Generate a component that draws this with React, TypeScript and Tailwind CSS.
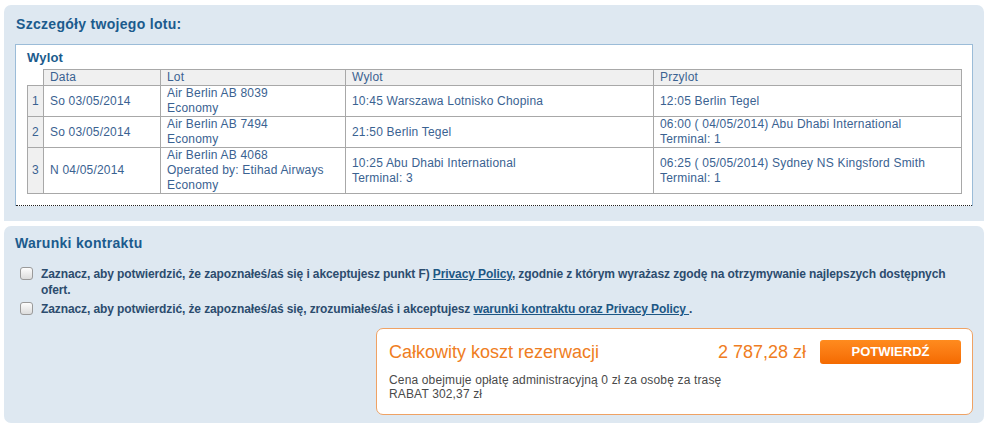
import React from "react";

const rows = [
  { n: "1", data: "So 03/05/2014", lot: ["Air Berlin AB 8039", "Economy"], wylot: ["10:45 Warszawa Lotnisko Chopina"], przylot: ["12:05 Berlin Tegel"] },
  { n: "2", data: "So 03/05/2014", lot: ["Air Berlin AB 7494", "Economy"], wylot: ["21:50 Berlin Tegel"], przylot: ["06:00 ( 04/05/2014) Abu Dhabi International", "Terminal: 1"] },
  { n: "3", data: "N 04/05/2014", lot: ["Air Berlin AB 4068", "Operated by: Etihad Airways", "Economy"], wylot: ["10:25 Abu Dhabi International", "Terminal: 3"], przylot: ["06:25 ( 05/05/2014) Sydney NS Kingsford Smith", "Terminal: 1"] },
];

function Lines({ items }: { items: string[] }) {
  return (
    <>
      {items.map((t, i) => (
        <div key={i}>{t}</div>
      ))}
    </>
  );
}

function Check() {
  return (
    <span className="mt-[1px] inline-block h-[13px] w-[13px] shrink-0 rounded-[3px] border border-[#9a9a9a] bg-gradient-to-b from-[#fdfdfd] to-[#dcdcdc]" />
  );
}

export default function App() {
  return (
    <div className="min-h-[428px] w-[988px] bg-white pt-[5px] font-['Liberation_Sans',Arial,sans-serif]">
      {/* Panel 1 */}
      <div className="ml-[4px] w-[980px] rounded-t-[7px] bg-[#dee8f1] pb-[15px] pl-[11px] pt-[11px]">
        <h2 className="pl-[1px] text-[14px] font-bold leading-[17px] tracking-[0.3px] text-[#1b5b8d]">Szczegóły twojego lotu:</h2>
        <div className="mt-[11px] w-[958px] border border-b-0 border-[#9bbcd8] bg-white">
          <div className="px-[11px] pt-[5px] text-[13px] font-bold leading-[16px] tracking-[0.2px] text-[#1b5b8d]">Wylot</div>
          <div className="pb-[11px] pl-[11px] pt-[3px]">
            <table className="w-[934px] table-fixed border-collapse text-[12px] leading-[15px] tracking-[0.2px] text-[#3a6291]">
              <colgroup>
                <col className="w-[16px]" />
                <col className="w-[117px]" />
                <col className="w-[185px]" />
                <col className="w-[308px]" />
                <col className="w-[308px]" />
              </colgroup>
              <thead>
                <tr>
                  <th className="p-0"></th>
                  <th className="border border-[#a8a8a8] bg-[#f0f0f0] px-[6px] text-left font-normal">Data</th>
                  <th className="border border-[#a8a8a8] bg-[#f0f0f0] px-[6px] text-left font-normal">Lot</th>
                  <th className="border border-[#a8a8a8] bg-[#f0f0f0] px-[6px] text-left font-normal">Wylot</th>
                  <th className="border border-[#a8a8a8] bg-[#f0f0f0] px-[6px] text-left font-normal">Przylot</th>
                </tr>
              </thead>
              <tbody>
                {rows.map((r) => (
                  <tr key={r.n}>
                    <td className="border border-[#a8a8a8] bg-[#f0f0f0] p-0 text-center align-middle">{r.n}</td>
                    <td className="border border-[#a8a8a8] px-[6px] py-0 align-middle">{r.data}</td>
                    <td className="border border-[#a8a8a8] px-[6px] py-0 align-middle"><Lines items={r.lot} /></td>
                    <td className="border border-[#a8a8a8] px-[6px] py-0 align-middle"><Lines items={r.wylot} /></td>
                    <td className="border border-[#a8a8a8] px-[6px] py-0 align-middle"><Lines items={r.przylot} /></td>
                  </tr>
                ))}
              </tbody>
            </table>
          </div>
          <div className="h-0 border-b border-dotted border-[#222]" />
        </div>
      </div>

      {/* Panel 2 */}
      <div className="ml-[4px] mt-[5px] w-[980px] rounded-[7px] bg-[#dee8f1] pb-[8px] pl-[11px] pt-[9px]">
        <h2 className="text-[14px] font-bold leading-[17px] tracking-[0.3px] text-[#1b5b8d]">Warunki kontraktu</h2>
        <div className="mt-[14px] flex flex-col gap-[3px] pl-[5px] pr-[20px] text-[12px] font-bold leading-[16px] tracking-[-0.1px] text-[#2c4c6e]">
          <div className="flex gap-[8px]">
            <Check />
            <div>
              <div>
                <span>Zaznacz, aby potwierdzić, że zapoznałeś/aś się i akceptujesz punkt F) </span>
                <a className="text-[#1d5784] underline">Privacy Policy</a>
                <span>, zgodnie z którym wyrażasz zgodę na otrzymywanie najlepszych dostępnych</span>
              </div>
              <div>ofert.</div>
            </div>
          </div>
          <div className="flex gap-[8px]">
            <Check />
            <div>
              <span>Zaznacz, aby potwierdzić, że zapoznałeś/aś się, zrozumiałeś/aś i akceptujesz </span>
              <a className="text-[#1d5784] underline">warunki kontraktu oraz Privacy Policy </a>
              <span>.</span>
            </div>
          </div>
        </div>
        <div className="ml-[361px] mt-[11px] w-[597px] rounded-[7px] border border-[#efa264] bg-white pb-[13px] pl-[12px] pr-[11px] pt-[11px]">
          <div className="flex items-center">
            <span className="text-[18px] leading-[22px] text-[#ef7d22]">Całkowity koszt rezerwacji</span>
            <span className="ml-auto text-[18px] leading-[22px] text-[#ef7d22]">2 787,28 zł</span>
            <button className="ml-[14px] h-[24px] w-[141px] rounded-[3px] bg-gradient-to-b from-[#ff8b1e] to-[#f46a00] text-[13px] font-bold text-white">
              POTWIERDŹ
            </button>
          </div>
          <div className="mt-[9px] text-[12px] leading-[14px] tracking-[0.15px] text-[#4a4a4a]">
            <div>Cena obejmuje opłatę administracyjną 0 zł za osobę za trasę</div>
            <div>RABAT 302,37 zł</div>
          </div>
        </div>
      </div>
    </div>
  );
}
